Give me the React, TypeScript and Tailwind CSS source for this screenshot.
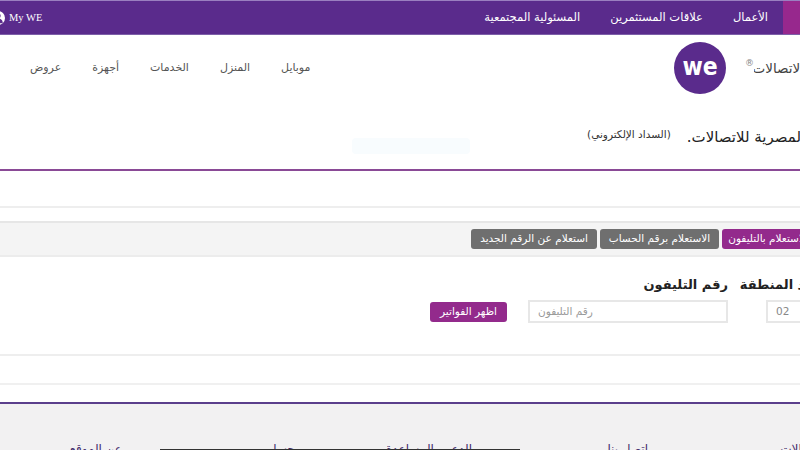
const arabic = "font-['DejaVu_Sans','Noto_Sans',sans-serif]";

function TopBar() {
  return (
    <div className="flex h-[35px] items-stretch border-t border-t-[#9a7fc0] border-b border-b-[#7d5fa8] bg-[#5a2b8c] text-white">
      <div className="w-[17px] shrink-0 bg-[#97288d]" />
      <div className="mr-[15px] flex items-center gap-[30px] text-[11.5px]">
        <span>الأعمال</span>
        <span>علاقات المستثمرين</span>
        <span>المسئولية المجتمعية</span>
      </div>
      <div className="mr-auto -ml-[9px] flex items-center gap-[4px]" dir="ltr">
        <svg width="14" height="14" viewBox="0 0 16 16" className="rounded-full bg-white">
          <circle cx="8" cy="5.500" r="3" fill="#5a2b8c" />
          <path d="M2.500 14c0-3.600 2.400-5.500 5.500-5.500s5.500 1.900 5.500 5.500z" fill="#5a2b8c" />
        </svg>
        <span className="font-['Liberation_Serif',serif] text-[10.5px]">My WE</span>
      </div>
    </div>
  );
}

function Header() {
  return (
    <div className="flex h-[70px] items-center pb-[4px]">
      <div className="w-[46px] shrink-0 overflow-hidden text-[13.5px] whitespace-nowrap text-[#444]">
        <span className="-mr-[4px]">الاتصالات</span>
      </div>
      <span className="-mt-[8px] text-[9px] text-[#888]">®</span>
      <div className="mr-[19px] flex h-[52px] w-[52px] shrink-0 items-center justify-center rounded-full bg-[#5a2b8c] font-['DejaVu_Sans',sans-serif] text-[22px] leading-none font-bold text-white" dir="ltr">
        <span className="-mt-[3px] [transform:scaleY(1.15)]">we</span>
      </div>
      <nav className="mr-auto flex items-center gap-[31px] pl-[30px] text-[11px] text-[#555]">
        <span>موبايل</span>
        <span>المنزل</span>
        <span>الخدمات</span>
        <span>أجهزة</span>
        <span>عروض</span>
      </nav>
    </div>
  );
}

function Title() {
  return (
    <div className="flex h-[66px] items-center border-b-2 border-b-[#8a4a96]">
      <div className="-mr-[46px] flex items-start gap-[16px] whitespace-nowrap">
        <span className="text-[15px] text-[#222]">شركة المصرية للاتصالات.</span>
        <span className="mt-[1px] text-[10.5px] text-[#333]">(السداد الإلكتروني)</span>
      </div>
      <div className="mr-[117px] mt-[18px] h-[16px] w-[118px] rounded-sm bg-[#f8fcfe]" />
    </div>
  );
}

function Tabs() {
  const base = "flex h-[20px] items-center justify-center rounded-[3px] text-[10.5px] text-white whitespace-nowrap shrink-0";
  return (
    <div className="mt-[35px] border-t-2 border-t-[#eeeeee] pt-[13px]">
      <div className="flex h-[36px] items-center gap-[3px] border-t-2 border-t-[#e6e6e6] border-b-2 border-b-[#ececec] bg-[#f4f4f4]">
        <div className={`${base} -mr-[14px] w-[92px] bg-[#932a8c]`}>الاستعلام بالتليفون</div>
        <div className={`${base} w-[119px] bg-[#6f6f6f]`}>الاستعلام برقم الحساب</div>
        <div className={`${base} w-[126px] bg-[#6f6f6f]`}>استعلام عن الرقم الجديد</div>
      </div>
    </div>
  );
}

function Form() {
  return (
    <div className="flex h-[97px] items-start pt-[18px]">
      <div className="-mr-[20px] w-[54px] shrink-0">
        <div className="h-[25px] text-[13px] leading-[20px] font-bold whitespace-nowrap text-[#222]">كود المنطقة</div>
        <div className="flex h-[23px] items-center border-2 border-[#e7e7e7] px-[8px] text-[10.5px] text-[#888]">
          <span className="mr-auto">02</span>
        </div>
      </div>
      <div className="mr-[38px] w-[200px] shrink-0">
        <div className="h-[25px] text-[13px] leading-[20px] font-bold whitespace-nowrap text-[#222]">رقم التليفون</div>
        <div className="flex h-[23px] items-center border-2 border-[#e7e7e7] px-[8px] text-[10.5px] text-[#999]">
          <span className="mr-auto">رقم التليفون</span>
        </div>
      </div>
      <div className="mr-[21px] mt-[27px] flex h-[20px] w-[77px] shrink-0 items-center justify-center rounded-[3px] bg-[#932a8c] text-[10.5px] text-white">اظهر الفواتير</div>
    </div>
  );
}

function Rules() {
  return (
    <div>
      <div className="h-[2px] bg-[#eeeeee]" />
      <div className="h-[27px]" />
      <div className="h-[2px] bg-[#f0f0f0]" />
      <div className="h-[17px]" />
    </div>
  );
}

function Footer() {
  return (
    <div className="h-[200px] border-t-2 border-t-[#5b3f8c] bg-[#f2f1f2] pt-[36px]">
      <div className="flex text-[12px] whitespace-nowrap text-[#3f2a6b]">
        <span className="-mr-[26px] w-[96px]">الاتصالات</span>
        <span className="mr-[82px] w-[43px]">اتصل بنا</span>
        <span className="mr-[133px] w-[94px]">الدعم والمساعدة</span>
        <span className="mr-[83px] w-[33px]">حساب</span>
        <span className="mr-[140px] w-[57px]">عن الموقع</span>
      </div>
    </div>
  );
}

export default function App() {
  return (
    <div dir="rtl" className={`relative h-[450px] w-[800px] overflow-hidden bg-white ${arabic}`}>
      <TopBar />
      <Header />
      <Title />
      <Tabs />
      <Form />
      <Rules />
      <Footer />
      <div className="absolute bottom-0 left-[160px] h-[1px] w-[360px] bg-[#333]" />
    </div>
  );
}
